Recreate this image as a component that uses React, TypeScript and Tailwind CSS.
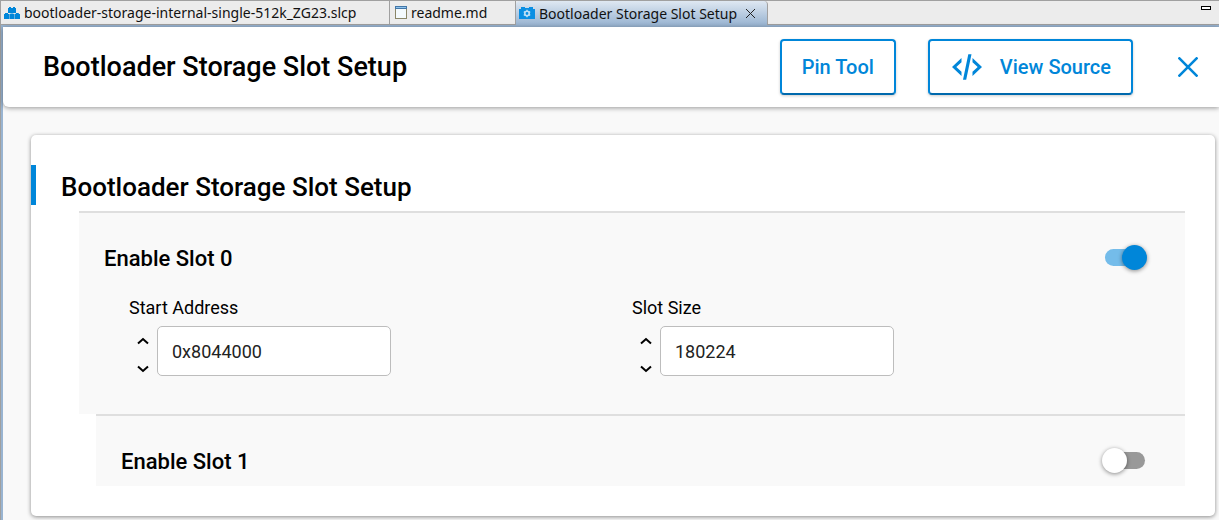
import { useState } from "react";
import type { ReactNode } from "react";

type EditorTabProps = {
  icon: ReactNode;
  title: string;
  className: string;
  active?: boolean;
};

type NumberFieldProps = {
  id: string;
  label: string;
  initial: string;
};

type SlotToggleProps = {
  id: string;
  label: string;
  initial: boolean;
};

function BlocksIcon() {
  return (
    <svg width="16" height="12" viewBox="0 0 16 12" fill="#0086d9" aria-hidden="true">
      <path d="M4 1h1V0h2v1h2V0h2v1h1v5H4z" />
      <path d="M0 7h1V6h3v1h1v5H0zM5.4 7h1V6.4h3V7h1v5h-5zM10.8 7h1V6h3v1H16v5h-5.2z" />
    </svg>
  );
}

function FileIcon() {
  return (
    <svg width="12" height="13" viewBox="0 0 12 13" aria-hidden="true">
      <rect x="0.5" y="0.5" width="11" height="12" fill="#f4fafd" stroke="#8a8668" />
      <rect x="0" y="0" width="12" height="3" fill="#4377a8" />
      <rect x="1" y="1" width="10" height="1" fill="#8fc4ee" />
    </svg>
  );
}

function CameraGearIcon() {
  return (
    <svg width="16" height="12" viewBox="0 0 16 12" aria-hidden="true">
      <path d="M0 2h2V0h4v1h4V0h4v2h2v10H0z" fill="#0a8fe3" />
      <circle cx="8" cy="6.5" r="2.2" fill="none" stroke="#bfe0f6" strokeWidth="1.6" />
      <path
        d="M8 2.8v1.4M8 8.8v1.4M4.8 4.6l1.2.7M10 7.7l1.2.7M4.8 8.4l1.2-.7M10 5.3l1.2-.7"
        stroke="#bfe0f6"
        strokeWidth="1.4"
      />
    </svg>
  );
}

function CodeIcon() {
  return (
    <svg width="30" height="26" viewBox="0 0 30 26" fill="#0086d9" aria-hidden="true">
      <path d="M9.500 4v4.200L4.300 13l5.200 4.800V22L0 13zM20.500 4v4.200l5.200 4.800-5.200 4.800V22L30 13zM16.300.3h3.200L14.200 25.700H11z" />
    </svg>
  );
}

function Chevron({ down = false }: { down?: boolean }) {
  return (
    <svg width="12" height="8" viewBox="0 0 12 8" fill="none" stroke="#000" strokeWidth="2" aria-hidden="true">
      <path d={down ? "M1 1.5l5 4.5 5-4.5" : "M1 6.5L6 2l5 4.5"} />
    </svg>
  );
}

function EditorTab({ icon, title, className, active = false }: EditorTabProps) {
  return (
    <div
      className={`flex items-center border-r border-[#a0a0a0] ${className} ${
        active ? "rounded-t-sm bg-linear-to-b from-[#dfe8f2] to-[#99b4d1]" : "border-b bg-[#ececec]"
      }`}
    >
      <button type="button" className="flex items-center gap-1 whitespace-nowrap">
        {icon}
        {title}
      </button>
      {active && (
        <button type="button" aria-label="Close tab" className="ml-2">
          <svg width="11" height="11" viewBox="0 0 11 11" stroke="#222" aria-hidden="true">
            <path d="M1 1l9 9M10 1l-9 9" />
          </svg>
        </button>
      )}
    </div>
  );
}

function NumberField({ id, label, initial }: NumberFieldProps) {
  const [value, setValue] = useState(initial);

  const step = (delta: number) => {
    const next = Number(value) + delta;
    if (Number.isNaN(next)) return;
    setValue(value.startsWith("0x") ? `0x${next.toString(16)}` : String(next));
  };

  return (
    <div>
      <label htmlFor={id} className="block text-[18px] leading-6">
        {label}
      </label>
      <div className="mt-1.5 flex items-center">
        <div className="flex w-7 flex-col items-center gap-5 pt-2">
          <button type="button" aria-label={`Increase ${label}`} onClick={() => step(1)}>
            <Chevron />
          </button>
          <button type="button" aria-label={`Decrease ${label}`} onClick={() => step(-1)}>
            <Chevron down />
          </button>
        </div>
        <input
          id={id}
          type="text"
          value={value}
          onChange={(e) => setValue(e.target.value)}
          className="h-[50px] w-[234px] rounded-[5px] border border-[#bdbdbd] bg-white px-3.5 text-[18px] text-[#222]"
        />
      </div>
    </div>
  );
}

function SlotToggle({ id, label, initial }: SlotToggleProps) {
  const [on, setOn] = useState(initial);

  return (
    <div className="flex h-[23px] items-center justify-between">
      <label htmlFor={id} className="pt-0.5 text-[22px] font-medium">
        {label}
      </label>
      <input
        id={id}
        type="checkbox"
        role="switch"
        checked={on}
        onChange={(e) => setOn(e.target.checked)}
        className="mr-10 flex h-[17px] w-10 appearance-none items-center rounded-full bg-[#999] before:-ml-[3px] before:size-[25px] before:shrink-0 before:rounded-full before:bg-white before:shadow-[0_1px_4px_rgba(0,0,0,0.45)] checked:bg-[#74bcea] checked:before:ml-[17px] checked:before:bg-[#0086d9]"
      />
    </div>
  );
}

export default function App() {
  return (
    <div className="flex min-h-screen flex-col border-l border-[#a0a0a0] bg-[#f9f9f9] font-[Roboto,sans-serif] text-black">
      <nav className="flex h-[27px] border-t border-b-2 border-t-[#a0a0a0] border-b-[#99b4d1] bg-[#ececec] font-['Noto_Sans',sans-serif] text-[14px] text-[#111]">
        <EditorTab icon={<BlocksIcon />} title="bootloader-storage-internal-single-512k_ZG23.slcp" className="w-[389px] pl-[3px]" />
        <EditorTab icon={<FileIcon />} title="readme.md" className="w-[126px] pl-[5px]" />
        <EditorTab icon={<CameraGearIcon />} title="Bootloader Storage Slot Setup" className="w-[252px] pl-[3px]" active />
        <div className="flex flex-1 items-start justify-end border-b border-[#a0a0a0] pt-[5px] pr-2">
          <button type="button" aria-label="Minimize" className="h-1 w-2.5 border border-black bg-white" />
        </div>
      </nav>

      <div className="flex-1 border-l-2 border-[#99b4d1] pb-1">
        <header className="flex h-20 items-center rounded-bl-md bg-white pr-[21px] pl-10 shadow-[0_1px_5px_rgba(0,0,0,0.4)]">
          <h1 className="flex-1 text-[27px] font-medium">Bootloader Storage Slot Setup</h1>
          <button
            type="button"
            className="h-14 rounded-sm border-2 border-b-[#0069ad] border-[#0086d9] px-5 text-[20px] font-medium text-[#0086d9] shadow-[0_1px_3px_rgba(0,0,0,0.2)]"
          >
            Pin Tool
          </button>
          <button
            type="button"
            className="ml-8 flex h-14 items-center gap-[18px] rounded-sm border-2 border-b-[#0069ad] border-[#0086d9] pr-5 pl-[22px] text-[20px] font-medium text-[#0086d9] shadow-[0_1px_3px_rgba(0,0,0,0.2)]"
          >
            <CodeIcon />
            View Source
          </button>
          <button type="button" aria-label="Close" className="ml-[45px]">
            <svg width="20" height="20" viewBox="0 0 20 20" stroke="#0086d9" strokeWidth="2.6" aria-hidden="true">
              <path d="M0.500 0.500l19 19M19.500 0.500l-19 19" />
            </svg>
          </button>
        </header>

        <main className="mt-7 mr-1 ml-7 rounded-[5px] bg-white py-[30px] shadow-[0_1px_4px_rgba(0,0,0,0.45)]">
          <h2 className="flex h-10 items-center border-l-[5px] border-[#0086d9] pt-1 pl-[25px] text-[26px] font-medium">
            Bootloader Storage Slot Setup
          </h2>
          <section className="mt-1.5 mr-[30px] ml-12 border-t-2 border-[#dfdfdf] bg-[#f9f9f9] pt-[33px] pb-[38px] pl-[25px]">
            <SlotToggle id="slot0" label="Enable Slot 0" initial={true} />
            <div className="mt-[27px] mr-[50px] ml-[25px] grid grid-cols-2">
              <NumberField id="start-address" label="Start Address" initial="0x8044000" />
              <NumberField id="slot-size" label="Slot Size" initial="180224" />
            </div>
          </section>
          <section className="mr-[30px] ml-[65px] border-t-2 border-[#dfdfdf] bg-[#f9f9f9] pt-[33px] pb-3.5 pl-[25px]">
            <SlotToggle id="slot1" label="Enable Slot 1" initial={false} />
          </section>
        </main>
      </div>
    </div>
  );
}
